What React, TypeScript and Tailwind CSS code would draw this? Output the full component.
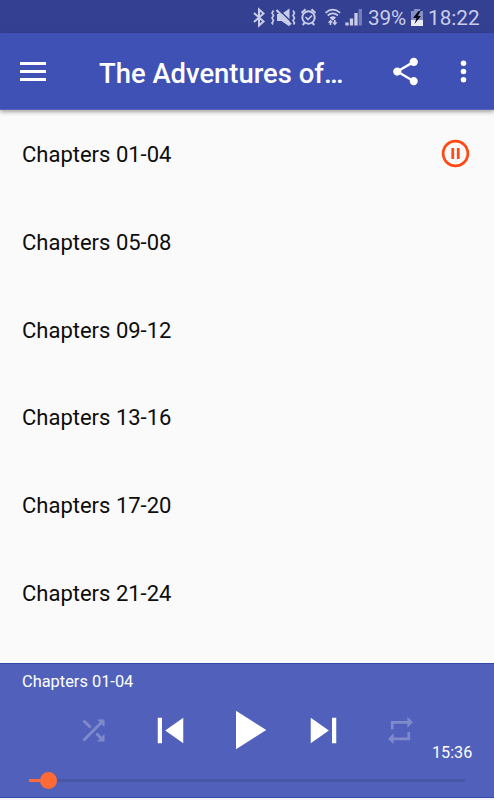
import { useState } from "react";
import type { ReactNode } from "react";
import clsx from "clsx";

const CHAPTERS = [
  "Chapters 01-04",
  "Chapters 05-08",
  "Chapters 09-12",
  "Chapters 13-16",
  "Chapters 17-20",
  "Chapters 21-24",
];

function Icon({ className, children }: { className: string; children: ReactNode }) {
  return (
    <svg viewBox="0 0 24 24" fill="currentColor" aria-hidden className={clsx("block shrink-0", className)}>
      {children}
    </svg>
  );
}

function StatusBar() {
  return (
    <div className="flex h-[33px] shrink-0 items-center bg-[#344092] pl-[252px] text-[#c9cde8]">
      {/* bluetooth, vibrate, alarm, wifi, signal */}
      <svg width="112" height="24" viewBox="252 6 112 24" fill="none" stroke="currentColor" className="mt-[3px] block shrink-0">
        <path d="M254 13l9.500 8.500-4.500 4V9.500l4.500 4-9.500 8.500" strokeWidth="2" />
        <path d="M277 14h4.500l8-5.500v18l-8-5.500H277z" fill="currentColor" stroke="none" />
        <path d="M278 9l14 13.500" stroke="#344092" strokeWidth="1.500" />
        <path d="M276.500 10l14.500 14.500" strokeWidth="2.200" />
        <path d="M273.500 10.500l-1.500 2.500 1.500 2.500-1.500 2.500 1.500 2.500-1.500 2.500 1 1.500M293 10.500l1.500 2.500-1.500 2.500 1.500 2.500-1.500 2.500 1.500 2.500-1 1.500" strokeWidth="1.600" />
        <circle cx="308.500" cy="17.500" r="6.200" strokeWidth="1.900" />
        <path d="M305.500 17l2.500 2.500 4-4" strokeWidth="1.600" />
        <path d="M301.500 13l4-3.700M315.500 13l-4-3.700M304.500 23l-1.800 2M312.500 23l1.800 2" strokeWidth="1.900" />
        <path d="M325.500 12.800q7.300-6.200 14.600 0M327.700 15.500q5.100-4.200 10.200 0" strokeWidth="1.700" />
        <path d="M329.500 17.500q3.300-2.400 6.600 0l-3.300 3.200z" fill="currentColor" stroke="none" />
        <path d="M330.500 25v-3.500M334.800 20v3.500" strokeWidth="1.700" />
        <path d="M327.800 22.800l2.700-3.300 2.700 3.300zM332.100 22.200l2.700 3.300 2.700-3.300z" fill="currentColor" stroke="none" />
        <path d="M347 25.500v-3M351.500 25.500v-7M356 25.500V13" strokeWidth="3.300" />
        <path d="M360.300 25.500V9" strokeWidth="3.300" opacity=".45" />
      </svg>
      <span className="ml-[4px] w-[43px] pt-[3px] text-[20.7px] leading-none tracking-[-0.1px]">39%</span>
      <svg width="12" height="17" viewBox="0 0 12 17" className="mt-[2px] block shrink-0">
        <path d="M3 0h6v2h3v15H0V2h3z" fill="#8790c4" />
        <path d="M0 11h12v6H0z" fill="#e8eaf6" />
        <path d="M7.500 2L2 9h3.500L3.500 15 10 7H7l2.500-5z" fill="#080a18" />
      </svg>
      <span className="ml-[5px] pt-[3px] text-[20.7px] leading-none">18:22</span>
    </div>
  );
}

function AppBar() {
  return (
    <header className="relative flex h-[77px] shrink-0 items-center border-b border-[#5863b9] bg-[#3f51b5] text-white shadow-[0_2px_4px_rgba(0,0,0,0.35)]">
      <button aria-label="Menu" className="ml-5">
        <svg width="26" height="19" viewBox="0 0 26 19" fill="currentColor" className="block">
          <path d="M0 0h26v3H0zM0 8h26v3H0zM0 16h26v3H0z" />
        </svg>
      </button>
      <h1 className="ml-[53px] w-[290px] pt-[5px] text-[27.4px] leading-8 font-medium whitespace-nowrap">The Adventures of…</h1>
      <button aria-label="Share">
        <Icon className="size-[33px]">
          <path d="M18 16.080c-.76 0-1.440.3-1.960.77L8.910 12.700c.05-.23.09-.46.09-.7s-.04-.47-.09-.7l7.050-4.110c.54.5 1.250.81 2.040.81 1.660 0 3-1.340 3-3s-1.340-3-3-3-3 1.340-3 3c0 .24.04.47.09.7L8.040 9.810C7.500 9.310 6.790 9 6 9c-1.660 0-3 1.340-3 3s1.340 3 3 3c.79 0 1.500-.31 2.040-.81l7.120 4.160c-.05.21-.08.43-.08.65 0 1.610 1.310 2.920 2.920 2.920s2.920-1.310 2.920-2.920-1.310-2.920-2.920-2.920z" />
        </Icon>
      </button>
      <button aria-label="More options" className="ml-[25px]">
        <Icon className="size-[33px]">
          <circle cx="12" cy="6" r="2" />
          <circle cx="12" cy="12" r="2" />
          <circle cx="12" cy="18" r="2" />
        </Icon>
      </button>
    </header>
  );
}

function ChapterRow({ title, active, onSelect }: { title: string; active: boolean; onSelect: () => void }) {
  return (
    <li
      onClick={onSelect}
      className="flex h-[87.8px] shrink-0 items-center justify-between pr-[22px] pl-[22px] text-[22px] text-[#0d0d0d]"
    >
      <span className="pt-[1.4px]">{title}</span>
      {active && (
        <Icon className="size-[33px] text-[#ff4a14]">
          <path d="M9 16h2V8H9v8zm3-14C6.480 2 2 6.480 2 12s4.480 10 10 10 10-4.480 10-10S17.520 2 12 2zm0 18c-4.410 0-8-3.590-8-8s3.590-8 8-8 8 3.590 8 8-3.590 8-8 8zm1-4h2V8h-2v8z" />
        </Icon>
      )}
    </li>
  );
}

function Player({ title }: { title: string }) {
  return (
    <footer className="flex h-[135px] shrink-0 flex-col border-y border-[#3448a8] bg-[#5161bb] text-white">
      <div className="mt-[7px] pl-[22px] text-[16.4px] leading-[22px]">{title}</div>
      <div className="flex h-[74px] items-center pl-[77px]">
        <button aria-label="Shuffle" className="text-[#7f8acd]">
          <Icon className="size-[33px]">
            <path d="M10.590 9.170L5.410 4 4 5.410l5.170 5.170 1.420-1.410zM14.500 4l2.040 2.040L4 18.590 5.410 20 17.960 7.460 20 9.500V4h-5.500zm.33 9.410l-1.410 1.410 3.130 3.130L14.500 20H20v-5.500l-2.040 2.040-3.130-3.130z" />
          </Icon>
        </button>
        <button aria-label="Previous" className="ml-[35px]">
          <Icon className="size-[51px]">
            <path d="M6 6h2v12H6zm3.500 6l8.500 6V6z" />
          </Icon>
        </button>
        <button aria-label="Play" className="ml-[18px]">
          <Icon className="size-[66px]">
            <path d="M8 5v14l11-7z" />
          </Icon>
        </button>
        <button aria-label="Next" className="ml-[18px]">
          <Icon className="size-[51px]">
            <path d="M6 18l8.500-6L6 6v12zM16 6v12h2V6h-2z" />
          </Icon>
        </button>
        <button aria-label="Repeat" className="ml-[35px] text-[#7f8acd]">
          <Icon className="size-[33px]">
            <path d="M7 7h10v3l4-4-4-4v3H5v6h2V7zm10 10H7v-3l-4 4 4 4v-3h12v-6h-2v4z" />
          </Icon>
        </button>
        <span className="ml-[15px] self-end pb-[3px] text-[16.2px] leading-[22px]">15:36</span>
      </div>
      <div className="mt-[4px] flex h-[18px] items-center pr-[29px] pl-[29px]">
        <span className="h-[3px] w-[11px] bg-[#ff6a35]" />
        <span className="size-[17px] rounded-full bg-[#ff6a35]" />
        <span className="h-[3px] flex-1 bg-[#4756a5]" />
      </div>
    </footer>
  );
}

export default function App() {
  const [current, setCurrent] = useState(0);

  return (
    <div className="flex h-[800px] w-[494px] flex-col overflow-hidden bg-[#fafafa] font-[Roboto,sans-serif]">
      <StatusBar />
      <AppBar />
      <ul className="flex min-h-0 flex-1 flex-col overflow-hidden">
        {CHAPTERS.map((title, i) => (
          <ChapterRow key={title} title={title} active={i === current} onSelect={() => setCurrent(i)} />
        ))}
      </ul>
      <Player title={CHAPTERS[current]} />
      <div className="h-[2px] shrink-0 bg-[#f4f4fa]" />
    </div>
  );
}
